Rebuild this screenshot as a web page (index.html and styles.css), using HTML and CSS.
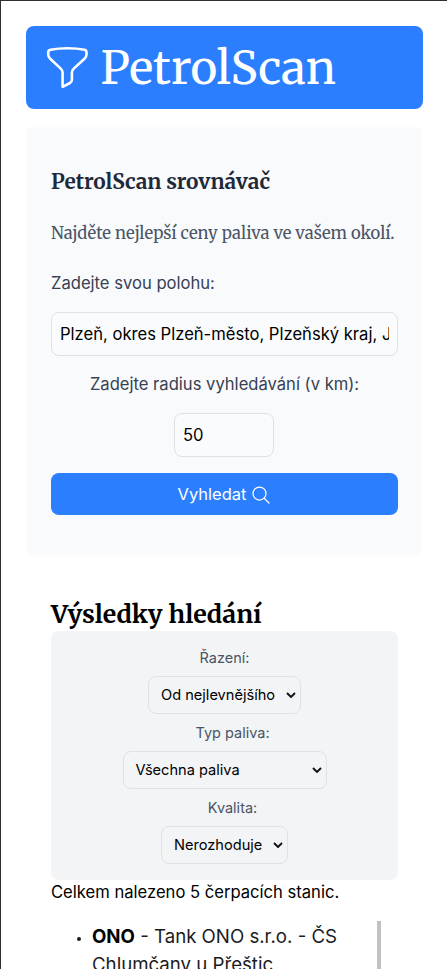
FILE: index.html
```html
<!DOCTYPE html>
<html lang="cs">
<head>
<meta charset="utf-8">
<meta name="viewport" content="width=device-width, initial-scale=1">
<title>PetrolScan</title>
<link rel="stylesheet" href="styles.css">
</head>
<body>
<div class="page">
  <header class="header">
    <svg class="funnel" viewBox="0 0 44 44" fill="none" stroke="currentColor" stroke-width="2.600" stroke-linejoin="round" stroke-linecap="round"><path d="M21.500 2.300C15.500 2.300 9.500 2.800 4.500 3.800C3.100 4.100 2.200 5 2.200 6.300V8.500C2.200 10.300 2.900 11.600 4.200 12.800L14.500 22.400C15.900 23.700 16.600 25 16.600 26.700V40.800L24 37C25.200 36.300 25.900 35.200 25.900 33.800V26.700C25.900 25 26.600 23.700 28 22.400L38.500 12.800C39.800 11.600 40.500 10.300 40.500 8.500V6.300C40.500 5 39.700 4.100 38.500 3.800C33.500 2.800 27.500 2.300 21.500 2.300Z"/></svg>
    <span class="brand">PetrolScan</span>
  </header>
  <section class="search">
    <h1 class="search-title">PetrolScan srovnávač</h1>
    <p class="lead">Najděte nejlepší ceny paliva ve vašem okolí.</p>
    <label class="label" for="place">Zadejte svou polohu:</label>
    <input class="input" id="place" type="text" value="Plzeň, okres Plzeň-město, Plzeňský kraj, Jihozápad, Česko">
    <label class="label centered" for="radius">Zadejte radius vyhledávání (v km):</label>
    <input class="input radius" id="radius" type="text" value="50">
    <button class="submit" type="button">Vyhledat
      <svg class="glass" viewBox="0 0 18 18" fill="none" stroke="currentColor" stroke-width="1.250" stroke-linecap="round"><circle cx="7.500" cy="7.500" r="6.500"/><path d="M12.200 12.200L17 17"/></svg>
    </button>
  </section>
  <main class="results">
    <h2 class="results-title">Výsledky hledání</h2>
    <div class="filters">
      <label class="filter-label" for="sort">Řazení:</label>
      <div class="select sort"><span id="sort">Od nejlevnějšího</span><svg class="chevron" viewBox="0 0 10 6"><path d="M1 1L5 5L9 1"/></svg></div>
      <label class="filter-label offset" for="fuel">Typ paliva:</label>
      <div class="select fuel"><span id="fuel">Všechna paliva</span><svg class="chevron" viewBox="0 0 10 6"><path d="M1 1L5 5L9 1"/></svg></div>
      <label class="filter-label offset" for="quality">Kvalita:</label>
      <div class="select quality"><span id="quality">Nerozhoduje</span><svg class="chevron" viewBox="0 0 10 6"><path d="M1 1L5 5L9 1"/></svg></div>
    </div>
    <p class="count">Celkem nalezeno 5 čerpacích stanic.</p>
    <div class="list-row">
      <ul class="stations">
        <li><strong>ONO</strong> - Tank ONO s.r.o. - ČS Chlumčany u Přeštic</li>
      </ul>
      <div class="scroll-thumb"></div>
    </div>
  </main>
</div>
</body>
</html>
```
FILE: styles.css
```css
* { box-sizing: border-box; }
body { margin: 0; font-family: Inter, sans-serif; color: #000; background: #fff; }
h1, h2, p, ul { margin: 0; }
.page {
  height: 969px;
  overflow: hidden;
  padding: 25px 24px 0 25px;
  border: solid #302e33;
  border-width: 1px 0 0 1px;
}
.header {
  display: flex;
  align-items: center;
  height: 83px;
  padding-left: 20px;
  border-radius: 8px;
  background: #2b7fff;
  color: #fff;
}
.funnel { width: 44px; height: 44px; flex: none; }
.brand {
  margin-left: 10.500px;
  font: 45.7px/60px Merriweather, "DejaVu Serif", serif;
  white-space: nowrap;
}
.search {
  display: flex;
  flex-direction: column;
  height: 425px;
  margin: 19px 2px 0;
  padding: 36px 23px 0;
  border-radius: 3px;
  background: #f9fafc;
  box-shadow: 0 1px 4px 1px #f9fafc;
}
.search-title {
  font: bold 20.75px/36px Merriweather, "DejaVu Serif", serif;
  color: #1e2939;
  white-space: nowrap;
}
.lead {
  margin-top: 20px;
  font: 16.6px/28px Merriweather, "DejaVu Serif", serif;
  color: #4a5565;
  white-space: nowrap;
}
.label { margin-top: 23px; font-size: 16.600px; line-height: 24px; color: #364153; white-space: nowrap; }
.centered { margin-top: 16px; text-align: center; }
.input {
  width: 100%;
  height: 44px;
  flex: none;
  margin-top: 17px;
  padding: 0 8px;
  border: 1px solid #dfe1e5;
  border-radius: 8px;
  background: #fafbfd;
  font: 16.600px Inter, sans-serif;
  color: #000;
}
.radius { align-self: center; width: 100px; margin-right: 1px; }
.submit {
  display: flex;
  justify-content: center;
  align-items: center;
  gap: 6px;
  height: 42px;
  flex: none;
  margin-top: 16px;
  padding: 0 1px 0 0;
  border: 0;
  border-radius: 8px;
  background: #2b7fff;
  color: #fff;
  font: 16.500px Inter, sans-serif;
}
.glass { width: 18px; height: 18px; margin-top: 2px; }
.results { padding: 44px 25px 0; }
.results-title {
  height: 34px;
  font: bold 24.9px/34px Merriweather, "DejaVu Serif", serif;
  white-space: nowrap;
}
.filters {
  display: flex;
  flex-direction: column;
  align-items: center;
  height: 249px;
  padding-top: 17px;
  border-radius: 8px;
  background: #f3f4f6;
}
.filter-label { font-size: 14.500px; line-height: 20px; color: #4a5565; }
.offset { padding-left: 16px; }
.select {
  display: flex;
  align-items: center;
  justify-content: space-between;
  height: 38px;
  margin: 8px 0 9px;
  padding: 0 4px 0 12px;
  border: 1px solid #dfe1e5;
  border-radius: 8px;
  font-size: 14.600px;
}
.sort { width: 153px; }
.fuel { width: 204px; }
.quality { width: 127px; }
.chevron { width: 10px; height: 6px; fill: none; stroke: #111; stroke-width: 1.900; }
.count { font-size: 16.600px; line-height: 24px; white-space: nowrap; }
.list-row { display: flex; justify-content: space-between; margin-top: 17px; }
.stations { width: 310px; padding-left: 41px; font-size: 18.650px; line-height: 28px; color: #1b1b1d; }
.stations li { margin-top: 1px; }
.stations li::marker { font-size: 13px; }
.stations strong { color: #000; }
.scroll-thumb { width: 4px; height: 70px; margin-right: 17px; background: #c1c1c1; }
```
